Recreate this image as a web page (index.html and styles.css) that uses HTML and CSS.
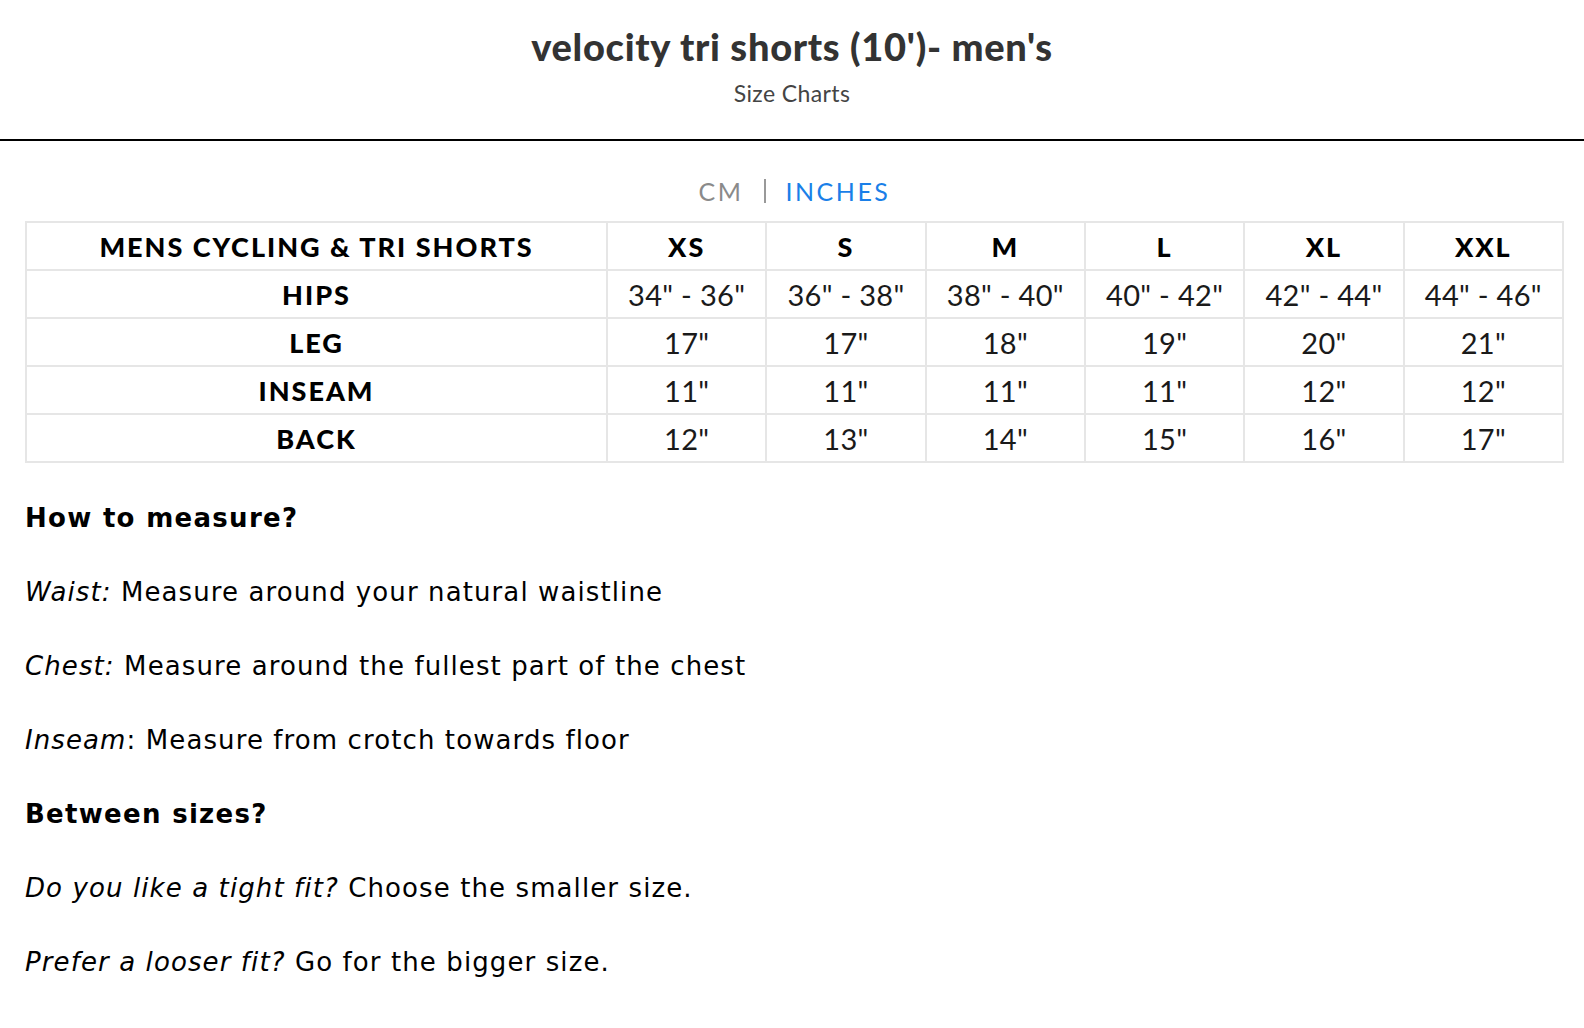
FILE: index.html
```html
<!DOCTYPE html>
<html>
<head>
<meta charset="utf-8">
<link rel="stylesheet" href="styles.css">
</head>
<body>
<header class="top">
  <h1 class="title">velocity tri shorts (10')- men's</h1>
  <div class="subtitle">Size Charts</div>
</header>
<main class="content">
  <div class="units"><span class="unit">CM</span><span class="sep"></span><span class="unit active">INCHES</span></div>
  <table class="chart">
    <colgroup><col class="c-first"><col><col><col><col><col><col></colgroup>
    <tr class="head"><th>MENS CYCLING &amp; TRI SHORTS</th><th>XS</th><th>S</th><th>M</th><th>L</th><th>XL</th><th>XXL</th></tr>
    <tr><th>HIPS</th><td>34" - 36"</td><td>36" - 38"</td><td>38" - 40"</td><td>40" - 42"</td><td>42" - 44"</td><td>44" - 46"</td></tr>
    <tr><th>LEG</th><td>17"</td><td>17"</td><td>18"</td><td>19"</td><td>20"</td><td>21"</td></tr>
    <tr><th>INSEAM</th><td>11"</td><td>11"</td><td>11"</td><td>11"</td><td>12"</td><td>12"</td></tr>
    <tr><th>BACK</th><td>12"</td><td>13"</td><td>14"</td><td>15"</td><td>16"</td><td>17"</td></tr>
  </table>
  <div class="notes">
    <p class="strong">How to measure?</p>
    <p><em>Waist:</em> Measure around your natural waistline</p>
    <p><em>Chest:</em> Measure around the fullest part of the chest</p>
    <p><em>Inseam</em>: Measure from crotch towards floor</p>
    <p class="strong">Between sizes?</p>
    <p><em>Do you like a tight fit?</em> Choose the smaller size.</p>
    <p><em>Prefer a looser fit?</em> Go for the bigger size.</p>
  </div>
</main>
</body>
</html>
```
FILE: styles.css
```css
html, body { margin: 0; padding: 0; background: #fff; }
body { font-family: "Lato", "DejaVu Sans", sans-serif; color: #000; }
.top {
  border-bottom: 2px solid #000;
  text-align: center;
  padding-top: 24px;
  height: 141px;
  box-sizing: border-box;
}
.title {
  margin: 0;
  font-family: "Lato", sans-serif;
  font-weight: 900;
  font-size: 38px;
  letter-spacing: 0.7px;
  line-height: 44px;
  color: #333;
}
.subtitle {
  margin-top: 10px;
  font-family: "Lato", sans-serif;
  font-size: 23px;
  letter-spacing: 0.4px;
  line-height: 30px;
  color: #444;
}
.content { padding: 0 20px 0 25px; }
.units {
  font-family: "Lato", sans-serif;
  font-size: 25px;
  letter-spacing: 2.5px;
  line-height: 30px;
  padding-top: 35px;
  padding-bottom: 15px;
  display: flex;
  justify-content: center;
  align-items: center;
  gap: 20px;
}
.unit { color: #8a8a8a; }
.unit.active { color: #1a7fe8; }
.sep { width: 2px; height: 24px; background: #999; }
.chart {
  width: 100%;
  table-layout: fixed;
  border-collapse: collapse;
  border: 2px solid #e6e6e6;
}
.c-first { width: 581px; }
.chart th, .chart td {
  border: 2px solid #e6e6e6;
  height: 46px;
  padding: 0;
  text-align: center;
  vertical-align: middle;
}
.chart th {
  font-family: "Lato", sans-serif;
  font-weight: 900;
  font-size: 27px;
  letter-spacing: 2px;
  color: #000;
}
.chart td {
  font-family: "Lato", sans-serif;
  font-weight: 400;
  font-size: 29px;
  letter-spacing: 0.3px;
  color: #1a1a1a;
}
.notes { padding-top: 37px; }
.notes p {
  margin: 0 0 37px;
  font-family: "DejaVu Sans", Verdana, sans-serif;
  font-size: 26px;
  letter-spacing: 1.1px;
  line-height: 37px;
}
.notes p.strong { font-weight: bold; letter-spacing: 1.3px; }
.notes em { font-style: italic; }
```
